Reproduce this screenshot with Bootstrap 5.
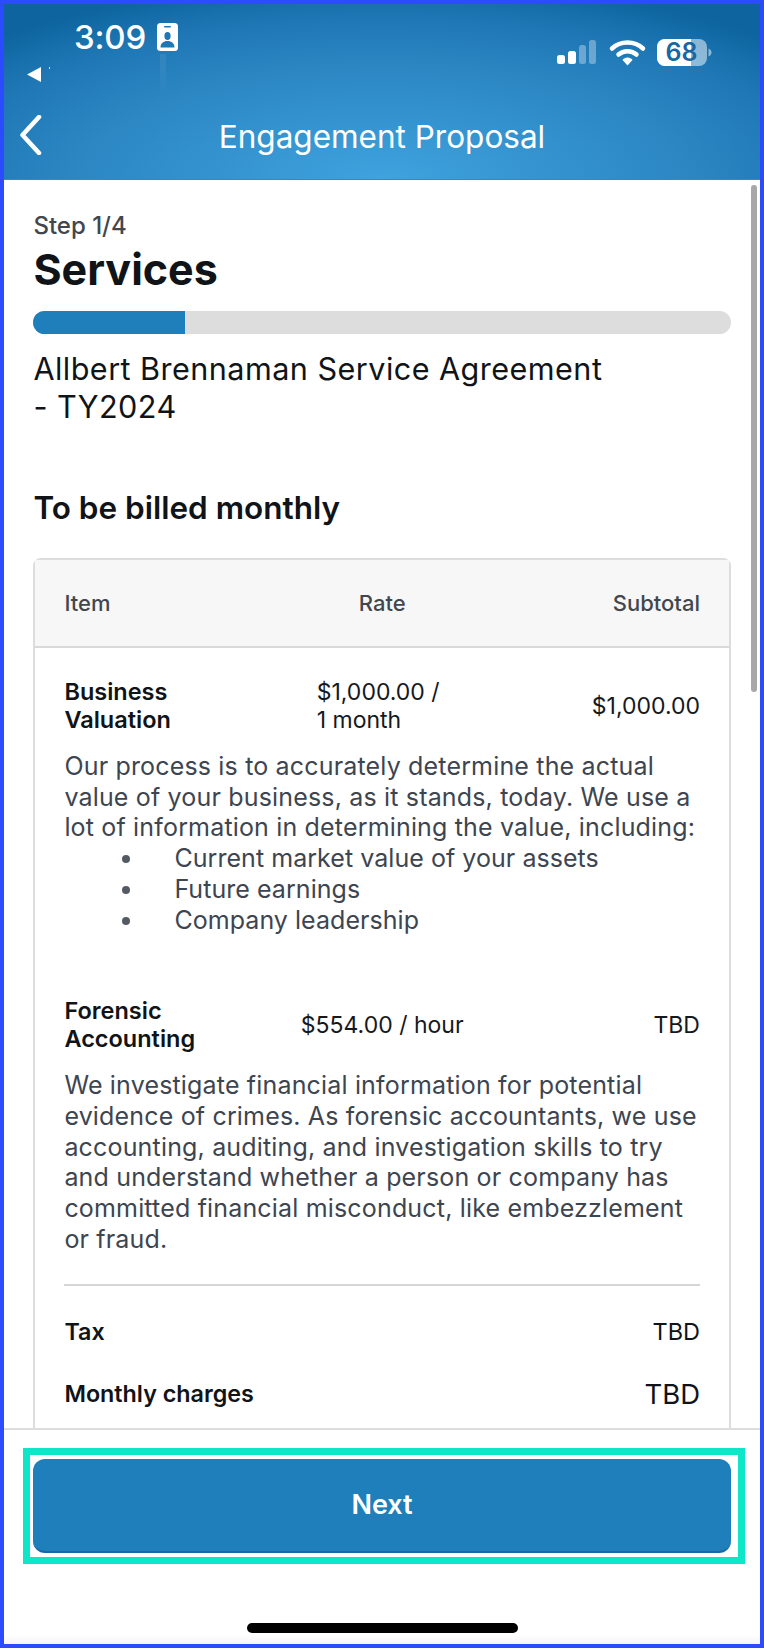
<!DOCTYPE html>
<html lang="en">
<head>
<meta charset="utf-8">
<title>Engagement Proposal</title>
<link rel="stylesheet" href="https://cdn.jsdelivr.net/npm/bootstrap@5.3.0/dist/css/bootstrap.min.css">
<style>
html,body{height:100%;margin:0;}
body{font-family:Inter,"Liberation Sans",sans-serif;color:#101418;background:#fff;}
.phone{height:1648px;border:4px solid #2b4bff;overflow:hidden;display:flex;flex-direction:column;background:#fff;}
.app-head{height:176px;flex:none;background:radial-gradient(ellipse 72% 200px at 50% 100%,#3fa3de 0%,#2c87c3 55%,#1f78b5 80%,#0d649f 100%);color:#fff;border-bottom:1px solid #2a8cc8;}
.stat-row{height:106px;}
.stat-left{padding-left:23px;}
.clock-line{padding-left:47px;height:48px;padding-top:18px;}
.clock{font-size:33px;font-weight:500;line-height:30px;letter-spacing:-.2px;}
.badge-ico{margin-left:11px;margin-top:1px;display:block;overflow:visible;}
.back-tri{display:block;margin-top:14px;}
.stat-right{padding-top:35px;padding-right:48px;}
.stat-ico{overflow:visible;}
.nav-line{display:grid;grid-template-columns:1fr auto 1fr;align-items:center;padding:0 14px;height:50px;}
.head-title{font-size:31.5px;font-weight:400;line-height:36px;padding-top:3px;}
.app-main{flex:1 1 auto;min-height:0;overflow:hidden;position:relative;padding:33px 29px 0 29.4px;}
.scroll-thumb{position:absolute;right:3px;top:5px;width:6px;height:507px;border-radius:3px;background:#a8a8a8;}
.step-txt{font-size:24px;font-weight:500;color:#42474e;line-height:26px;}
.page-title{font-size:43px;font-weight:700;line-height:50px;margin:5px 0 17px;}
.prog-track{height:23px;border-radius:12px;background:#dddddd;}
.prog-track .progress-bar{background:#1e7fbb;}
.agree-txt{font-size:30.6px;font-weight:400;line-height:38px;margin:16px 0 0;max-width:585px;letter-spacing:.45px;}
.bill-title{font-size:31.5px;font-weight:600;line-height:38px;margin:63px 0 31px;}
.svc-card{border:2px solid #dddddd;border-radius:8px;}
.svc-head{background:#f7f7f7;border-bottom:2px solid #d9d9d9;padding:0 29px;height:88px;display:flex;align-items:center;font-size:22px;font-weight:500;color:#42474e;}
.svc-head .row{flex:1;}
.svc-body{padding:30px 29px 60px;}
.svc-row{font-size:23px;line-height:28px;align-items:center;color:#15191d;}
.svc-name{font-weight:600;font-size:23.5px;color:#101418;}
.rate-stack{margin-right:8px;}
.svc-desc{font-size:25px;line-height:30.7px;color:#3d4550;margin:17px 0 0;letter-spacing:.17px;}
.svc-list{font-size:25px;line-height:30.7px;color:#3d4550;margin:0;padding-left:110px;letter-spacing:.05px;list-style:none;}
.svc-list li{position:relative;}
.svc-list li::before{content:"";position:absolute;left:-52px;top:12px;width:8px;height:8px;border-radius:50%;background:#555b63;}
.gap-forensic{margin-top:62px;}
.rule-line{height:2px;background:#d6d6d6;margin:30px 0 0;}
.tot-row{display:flex;justify-content:space-between;align-items:center;font-size:23.5px;color:#101418;}
.tot-label{font-weight:600;font-size:23.3px;}
.tot-big{font-size:27.5px;}
.tax-row{margin-top:32px;line-height:28px;}
.mon-row{margin-top:32px;line-height:32px;}
.app-foot{flex:none;height:216px;border-top:2px solid #dddddd;padding:18px 15px 0 19px;background:linear-gradient(to bottom,#fff 0,#fff 205px,#f5f5f5 100%);}
.cta-frame{border:7px solid #0ee6c8;padding:4px 7px 4px 3px;}
.cta-btn{display:block;width:100%;height:94px;background:#1e7fbb;border:0;border-bottom:2px solid #1868a5;border-radius:12px;color:#fff;font-size:27px;font-weight:600;}
.home-pill{width:271px;height:10px;border-radius:5px;background:#000;margin:59px 0 0 224px;}
</style>
</head>
<body>
<div class="phone">
  <header class="app-head">
    <div class="stat-row d-flex justify-content-between">
      <div class="stat-left">
        <div class="clock-line d-flex">
          <span class="clock">3:09</span>
          <svg class="badge-ico" width="21" height="28" viewBox="0 0 21 28"><defs><linearGradient id="streak" x1="0" y1="0" x2="0" y2="1"><stop offset="0" stop-color="#fff" stop-opacity=".08"/><stop offset="1" stop-color="#fff" stop-opacity="0"/></linearGradient></defs><rect x="3" y="31" width="6" height="42" fill="url(#streak)"/><rect width="21" height="28" rx="3.5" fill="#fff"/><rect x="7" y="3" width="7" height="1.6" rx=".8" fill="#1f78b5"/><ellipse cx="10.5" cy="13" rx="3.1" ry="3.9" fill="#1f78b5"/><path d="M3.5 24.5c0-4.2 3-6.5 7-6.5s7 2.3 7 6.5z" fill="#1f78b5"/></svg>
        </div>
        <svg class="back-tri" width="28" height="16" viewBox="0 0 28 16"><path d="M0 8.5 14 1v15z" fill="#fff"/><rect x="22" y="1" width="1" height="2" fill="#cfe4f2"/></svg>
      </div>
      <div class="stat-right">
        <svg class="stat-ico" width="155" height="27" viewBox="0 0 155 27">
          <rect x="0" y="16" width="8" height="9" rx="2.5" fill="#fff"/>
          <rect x="11" y="12" width="8" height="13" rx="2.5" fill="#fff"/>
          <rect x="22" y="6" width="7" height="19" rx="2.5" fill="#fff" fill-opacity=".33"/>
          <rect x="32" y="1" width="7" height="24" rx="2.5" fill="#fff" fill-opacity=".33"/>
          <path d="M55 9.500C63.500 1.500 77.500 1.500 86 9.500" fill="none" stroke="#fff" stroke-width="4.500" stroke-linecap="round"/>
          <path d="M61.500 15.500C66.500 11 74.500 11 79.500 15.500" fill="none" stroke="#fff" stroke-width="4.500" stroke-linecap="round"/>
          <path d="M70.500 18.500Q66.500 19 65.500 21L70.500 26.500 75.500 21Q74.500 19 70.500 18.500z" fill="#fff"/>
          <rect x="100" y="0" width="50" height="27" rx="8" fill="#fff" fill-opacity=".5"/>
          <path d="M108 0h26v27h-26a8 8 0 0 1-8-8V8a8 8 0 0 1 8-8z" fill="#fff"/>
          <path d="M151.500 9.500c2 .8 3 2.300 3 4s-1 3.200-3 4z" fill="#fff" fill-opacity=".5"/>
          <text x="124.500" y="22" text-anchor="middle" font-family="Inter,sans-serif" font-size="25" font-weight="600" fill="#1767a3">68</text>
        </svg>
      </div>
    </div>
    <div class="nav-line">
      <svg width="26" height="40" viewBox="0 0 26 40"><path d="M21 2 4.500 20 21 38" fill="none" stroke="#fff" stroke-width="4.500" stroke-linecap="round" stroke-linejoin="round"/></svg>
      <div class="head-title">Engagement Proposal</div>
      <div></div>
    </div>
  </header>
  <main class="app-main">
    <div class="scroll-thumb"></div>
    <div class="step-txt">Step 1/4</div>
    <h1 class="page-title">Services</h1>
    <div class="progress prog-track"><div class="progress-bar" style="width:21.7%"></div></div>
    <p class="agree-txt">Allbert Brennaman Service Agreement - TY2024</p>
    <h2 class="bill-title">To be billed monthly</h2>
    <div class="card svc-card">
      <div class="svc-head">
        <div class="row">
          <div class="col-4">Item</div>
          <div class="col-4 text-center">Rate</div>
          <div class="col-4 text-end">Subtotal</div>
        </div>
      </div>
      <div class="svc-body">
        <div class="row svc-row">
          <div class="col-4 svc-name">Business Valuation</div>
          <div class="col-4 d-flex justify-content-center"><div class="rate-stack">$1,000.00 /<br>1 month</div></div>
          <div class="col-4 text-end">$1,000.00</div>
        </div>
        <p class="svc-desc">Our process is to accurately determine the actual value of your business, as it stands, today. We use a lot of information in determining the value, including:</p>
        <ul class="svc-list">
          <li>Current market value of your assets</li>
          <li>Future earnings</li>
          <li>Company leadership</li>
        </ul>
        <div class="row svc-row gap-forensic">
          <div class="col-4 svc-name">Forensic Accounting</div>
          <div class="col-4 text-center">$554.00 / hour</div>
          <div class="col-4 text-end">TBD</div>
        </div>
        <p class="svc-desc">We investigate financial information for potential evidence of crimes. As forensic accountants, we use accounting, auditing, and investigation skills to try and understand whether a person or company has committed financial misconduct, like embezzlement or fraud.</p>
        <div class="rule-line"></div>
        <div class="tot-row tax-row"><span class="tot-label">Tax</span><span>TBD</span></div>
        <div class="tot-row mon-row"><span class="tot-label">Monthly charges</span><span class="tot-big">TBD</span></div>
      </div>
    </div>
  </main>
  <footer class="app-foot">
    <div class="cta-frame"><button type="button" class="btn cta-btn">Next</button></div>
    <div class="home-pill"></div>
  </footer>
</div>
<script src="https://cdn.jsdelivr.net/npm/bootstrap@5.3.0/dist/js/bootstrap.bundle.min.js"></script>
</body>
</html>
